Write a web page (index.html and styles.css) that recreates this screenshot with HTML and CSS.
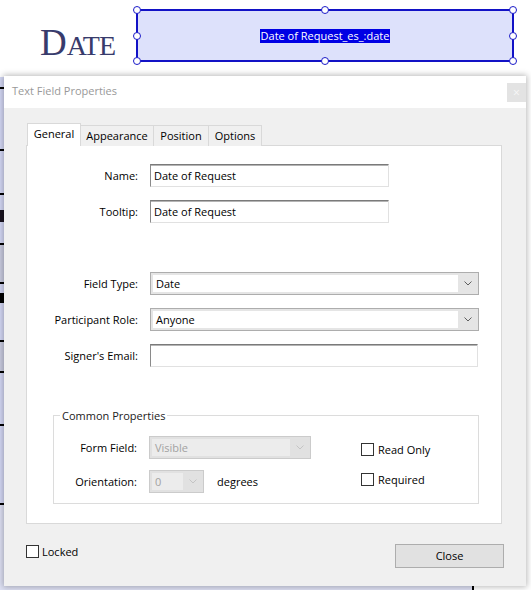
FILE: index.html
```html
<!DOCTYPE html>
<html>
<head>
<meta charset="utf-8">
<link rel="stylesheet" href="styles.css">
</head>
<body>
<div class="page">
  <div class="doc">
    <div class="doc-row">
      <div class="doc-label"><span class="cap">D</span><span class="sc">ATE</span></div>
      <div class="field">
        <span class="field-text">Date of Request_es_:date</span>
        <span class="h h-tl"></span><span class="h h-tc"></span><span class="h h-tr"></span>
        <span class="h h-ml"></span><span class="h h-mr"></span>
        <span class="h h-bl"></span><span class="h h-bc"></span><span class="h h-br"></span>
      </div>
    </div>
  </div>
  <div class="underlay"></div>

  <div class="dialog">
    <div class="titlebar">
      <span class="title">Text Field Properties</span>
      <span class="x-btn">×</span>
    </div>
    <div class="body">
      <div class="tabs">
        <div class="tab active t-general">General</div>
        <div class="tab t-appearance">Appearance</div>
        <div class="tab t-position">Position</div>
        <div class="tab t-options">Options</div>
      </div>
      <div class="panel">
        <div class="form form-a">
          <div class="lbl">Name:</div>
          <div class="input w-short">Date of Request</div>
          <div class="lbl">Tooltip:</div>
          <div class="input w-short">Date of Request</div>
        </div>
        <div class="form form-b">
          <div class="lbl">Field Type:</div>
          <div class="select w-long"><span class="sel-val">Date</span><span class="sel-arrow"><svg width="8" height="5" viewBox="0 0 8 5"><polyline points="0.5,0.5 4,4 7.5,0.5" fill="none" stroke="#5f5f5f" stroke-width="1"/></svg></span></div>
          <div class="lbl">Participant Role:</div>
          <div class="select w-long"><span class="sel-val">Anyone</span><span class="sel-arrow"><svg width="8" height="5" viewBox="0 0 8 5"><polyline points="0.5,0.5 4,4 7.5,0.5" fill="none" stroke="#5f5f5f" stroke-width="1"/></svg></span></div>
          <div class="lbl">Signer's Email:</div>
          <div class="input w-email"></div>
        </div>
        <fieldset class="group">
          <legend>Common Properties</legend>
          <div class="group-inner">
            <div class="gform">
              <div class="lbl">Form Field:</div>
              <div class="select disabled w-ff"><span class="sel-val">Visible</span><span class="sel-arrow"><svg width="8" height="5" viewBox="0 0 8 5"><polyline points="0.5,0.5 4,4 7.5,0.5" fill="none" stroke="#c4c4c4" stroke-width="1"/></svg></span></div>
              <div class="lbl">Orientation:</div>
              <div class="orient">
                <div class="select disabled w-or"><span class="sel-val">0</span><span class="sel-arrow"><svg width="8" height="5" viewBox="0 0 8 5"><polyline points="0.5,0.5 4,4 7.5,0.5" fill="none" stroke="#c4c4c4" stroke-width="1"/></svg></span></div>
                <span class="unit">degrees</span>
              </div>
            </div>
            <div class="checks">
              <div class="check"><span class="box"></span><span>Read Only</span></div>
              <div class="check"><span class="box"></span><span>Required</span></div>
            </div>
          </div>
        </fieldset>
      </div>
      <div class="footer">
        <div class="check locked"><span class="box"></span><span>Locked</span></div>
        <div class="btn">Close</div>
      </div>
    </div>
  </div>
</div>
</body>
</html>
```

FILE: styles.css
```css
* { box-sizing: border-box; }
html, body { margin: 0; padding: 0; }
body { background: #fff; }

.page {
  position: relative;
  width: 531px;
  height: 590px;
  overflow: hidden;
  background: #fff;
  font-family: "Open Sans", "Noto Sans", sans-serif;
  font-size: 11px;
  color: #000;
}

/* background document */
.doc-row {
  display: flex;
  align-items: flex-start;
  padding: 9px 0 0 40px;
}
.doc-label {
  width: 96px;
  margin-top: 15px;
  font-family: "Liberation Serif", serif;
  color: #383b6c;
  line-height: 37px;
  white-space: nowrap;
}
.doc-label .cap { font-size: 37px; }
.doc-label .sc { font-size: 28px; letter-spacing: -1px; }

.field {
  position: relative;
  width: 378px;
  height: 53px;
  border: 2px solid #1212c6;
  background: #dde1fb;
  display: flex;
  align-items: center;
  justify-content: center;
}
.field-text {
  background: #0000e4;
  color: #fff;
  font-size: 11px;
  line-height: 14px;
  padding: 0 1px;
}
.h {
  position: absolute;
  width: 8px;
  height: 8px;
  border: 1.5px solid #1a1ac8;
  border-radius: 50%;
  background: #fff;
}
.h-tl { left: -5px; top: -5px; }
.h-tc { left: calc(50% - 4px); top: -5px; }
.h-tr { right: -5px; top: -5px; }
.h-ml { left: -5px; top: calc(50% - 4px); }
.h-mr { right: -5px; top: calc(50% - 4px); }
.h-bl { left: -5px; bottom: -5px; }
.h-bc { left: calc(50% - 4px); bottom: -5px; }
.h-br { right: -5px; bottom: -5px; }

.underlay {
  position: absolute;
  left: 0;
  top: 77px;
  width: 474px;
  height: 513px;
  border-right: 2px solid #000;
  background: linear-gradient(to bottom,
    #d3d7f4 0 10px, #000 10px 12px,
    #d3d7f4 12px 72px, #000 72px 74px,
    #d3d7f4 74px 116px, #000 116px 118px,
    #d3d7f4 118px 133px, #1a1420 133px 145px,
    #d3d7f4 145px 166px, #000 166px 168px,
    #c9cbe0 168px 205px, #000 205px 207px,
    #d3d7f4 207px 216px, #000 216px 226px,
    #d3d7f4 226px 263px, #000 263px 265px,
    #c9cbe0 265px 294px, #000 294px 296px,
    #d3d7f4 296px 347px, #000 347px 349px,
    #d3d7f4 349px 426px, #000 426px 428px,
    #dde0f3 428px);
}

/* dialog */
.dialog {
  position: absolute;
  left: 4px;
  top: 76px;
  width: 522px;
  height: 510px;
  display: flex;
  flex-direction: column;
  background: #f0f0f0;
  box-shadow: 0 0 6px 1px rgba(0, 0, 0, 0.28);
}
.titlebar {
  height: 32px;
  flex: none;
  background: #fff;
  display: flex;
  align-items: center;
  justify-content: space-between;
  padding-left: 8px;
}
.title {
  color: #999;
  font-size: 11px;
  margin-bottom: 3px;
}
.x-btn {
  align-self: flex-start;
  margin-top: 7px;
  width: 19px;
  height: 19px;
  background: #e3e3e3;
  color: #f7f7f7;
  font-size: 12px;
  line-height: 19px;
  text-align: center;
}

.body {
  flex: 1;
  display: flex;
  flex-direction: column;
  padding: 15px 24px 0 22px;
}

.tabs {
  display: flex;
  align-items: flex-end;
  height: 23px;
  margin-left: 1px;
  margin-bottom: -1px;
  position: relative;
  z-index: 1;
}
.tab {
  height: 21px;
  border: 1px solid #d9d9d9;
  border-left: none;
  border-bottom: none;
  background: #f0f0f0;
  line-height: 20px;
  text-align: center;
  white-space: nowrap;
}
.tab.active {
  height: 23px;
  border-left: 1px solid #d9d9d9;
  background: #fff;
  line-height: 20px;
}
.t-general { width: 54px; }
.t-appearance { width: 73px; }
.t-position { width: 55px; }
.t-options { width: 53px; }

.panel {
  width: 476px;
  height: 379px;
  border: 1px solid #d9d9d9;
  background: #fff;
  padding-top: 18px;
}

.form {
  display: grid;
  grid-template-columns: 111px auto;
  column-gap: 12px;
  row-gap: 13px;
  align-items: center;
  justify-content: start;
}
.form-b { margin-top: 49px; }
.lbl {
  text-align: right;
  white-space: nowrap;
}

.input {
  height: 23px;
  border: 1px solid #e1e1e1;
  border-top-color: #7a7a7a;
  border-left-color: #8a8a8a;
  box-shadow: inset 0 1px 0 #b4b4b4;
  padding: 1px 3px 0;
  line-height: 20px;
  background: #fff;
}
.w-short { width: 239px; }
.w-email { width: 328px; }

.select {
  height: 23px;
  display: flex;
  border: 1px solid #adadad;
  background: #e5e5e5;
  padding: 2px 0 2px 2px;
}
.sel-val {
  flex: 1;
  background: #fff;
  padding-left: 3px;
  line-height: 17px;
}
.sel-arrow {
  width: 20px;
  flex: none;
  display: flex;
  align-items: center;
  justify-content: center;
}
.sel-arrow svg { display: block; }
.w-long { width: 329px; }

.select.disabled {
  border-color: #cbcbcb;
  background: #e1e1e1;
}
.select.disabled .sel-val {
  background: #ececec;
  color: #a2a2a2;
}
.w-ff { width: 162px; }
.w-or { width: 55px; }

.group {
  margin: 41px 0 0 26px;
  width: 426px;
  height: 96px;
  border: 1px solid #dcdcdc;
  padding: 14px 0 0 0;
  min-width: 0;
}
.group legend {
  margin-left: 6px;
  padding: 0 2px;
  line-height: 14px;
  color: #222;
  position: relative;
  top: 1px;
}
.group-inner {
  display: flex;
  align-items: flex-start;
}
.gform {
  display: grid;
  grid-template-columns: 83px auto;
  column-gap: 12px;
  row-gap: 11px;
  align-items: center;
}
.orient {
  display: flex;
  align-items: center;
}
.unit { margin-left: 13px; }

.checks {
  margin-left: 50px;
  padding-top: 7px;
  display: flex;
  flex-direction: column;
  gap: 17px;
}
.check {
  display: flex;
  align-items: center;
  gap: 4px;
  line-height: 13px;
}
.box {
  width: 13px;
  height: 13px;
  border: 1px solid #333;
  background: #fff;
  flex: none;
}

.footer {
  display: flex;
  justify-content: space-between;
  align-items: flex-start;
  padding-top: 20px;
  margin-right: -2px;
}
.locked {
  margin-top: 1px;
  gap: 3px;
}
.btn {
  width: 109px;
  height: 24px;
  border: 1px solid #adadad;
  background: #e1e1e1;
  text-align: center;
  line-height: 22px;
}
```
